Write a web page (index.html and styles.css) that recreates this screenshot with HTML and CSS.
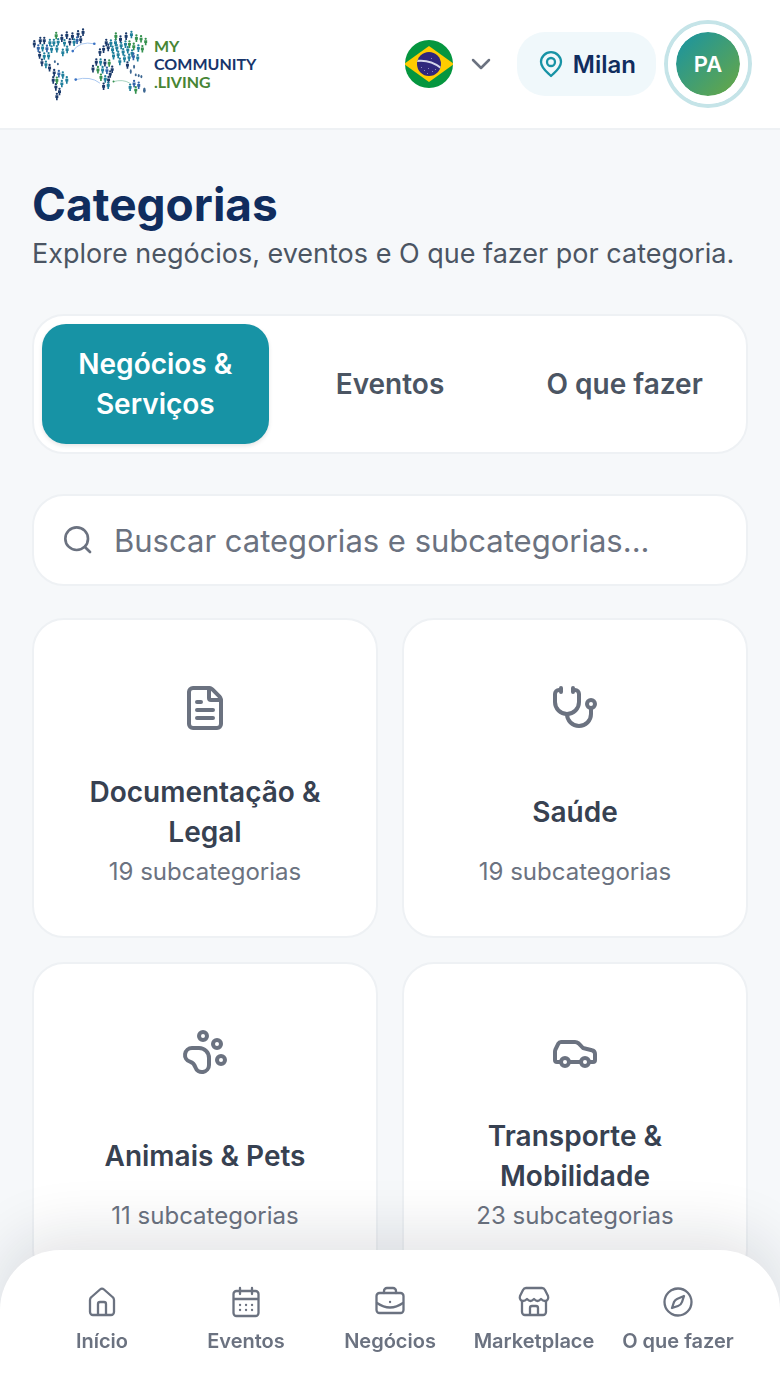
FILE: index.html
```html
<!DOCTYPE html>
<html lang="pt-BR">

<head>
    <meta charset="UTF-8">
    <meta name="viewport" content="width=device-width, initial-scale=1">
    <title>Categorias - My Community Living</title>
    <link rel="stylesheet" href="styles.css">
</head>

<body>
    <header class="header">
        <a class="logo" href="#" aria-label="My Community Living">
            <svg class="logo-map" viewBox="34 36 350 222" aria-hidden="true">
                <defs>
                    <g id="p">
                        <circle cy="-8" r="3.500" />
                        <path d="M-4.500-3.500h9v8h-2v7h-5v-7h-2z" />
                    </g>
                </defs>
                <g fill="#1b3a6b">
                    <use href="#p" x="41" y="86" /><use href="#p" x="59" y="76" /><use href="#p" x="71" y="76" />
                    <use href="#p" x="188" y="51" /><use href="#p" x="173" y="56" /><use href="#p" x="156" y="63" />
                    <use href="#p" x="139" y="60" /><use href="#p" x="124" y="69" /><use href="#p" x="181" y="73" />
                    <use href="#p" x="148" y="80" /><use href="#p" x="57" y="120" /><use href="#p" x="64" y="142" />
                    <use href="#p" x="87" y="158" /><use href="#p" x="101" y="173" /><use href="#p" x="98" y="195" />
                    <use href="#p" x="106" y="216" /><use href="#p" x="117" y="230" /><use href="#p" x="109" y="245" />
                    <use href="#p" x="258" y="82" /><use href="#p" x="250" y="102" /><use href="#p" x="239" y="111" />
                    <use href="#p" x="264" y="97" /><use href="#p" x="318" y="63" /><use href="#p" x="301" y="72" />
                    <use href="#p" x="228" y="141" /><use href="#p" x="218" y="161" /><use href="#p" x="276" y="163" />
                    <use href="#p" x="270" y="177" /><use href="#p" x="250" y="214" /><use href="#p" x="265" y="194" />
                    <use href="#p" x="322" y="150" /><use href="#p" x="254" y="143" />
                </g>
                <g fill="#1f7f9c">
                    <use href="#p" x="88" y="82" /><use href="#p" x="100" y="82" /><use href="#p" x="113" y="80" />
                    <use href="#p" x="132" y="83" /><use href="#p" x="161" y="81" /><use href="#p" x="66" y="98" />
                    <use href="#p" x="93" y="102" /><use href="#p" x="109" y="101" /><use href="#p" x="71" y="123" />
                    <use href="#p" x="84" y="122" /><use href="#p" x="127" y="112" /><use href="#p" x="140" y="103" />
                    <use href="#p" x="76" y="148" /><use href="#p" x="127" y="180" /><use href="#p" x="139" y="195" />
                    <use href="#p" x="124" y="206" /><use href="#p" x="272" y="84" /><use href="#p" x="286" y="82" />
                    <use href="#p" x="334" y="58" /><use href="#p" x="277" y="103" /><use href="#p" x="290" y="98" />
                    <use href="#p" x="303" y="91" /><use href="#p" x="316" y="87" /><use href="#p" x="280" y="122" />
                    <use href="#p" x="294" y="118" /><use href="#p" x="309" y="110" /><use href="#p" x="323" y="104" />
                    <use href="#p" x="336" y="114" /><use href="#p" x="355" y="99" /><use href="#p" x="299" y="139" />
                    <use href="#p" x="313" y="130" /><use href="#p" x="327" y="127" /><use href="#p" x="353" y="128" />
                    <use href="#p" x="241" y="141" /><use href="#p" x="247" y="164" /><use href="#p" x="255" y="192" />
                    <use href="#p" x="264" y="211" /><use href="#p" x="330" y="217" />
                </g>
                <g fill="#2f63a8">
                    <use href="#p" x="53" y="99" /><use href="#p" x="79" y="100" /><use href="#p" x="170" y="75" />
                    <use href="#p" x="115" y="176" /><use href="#p" x="340" y="124" /><use href="#p" x="260" y="166" />
                    <use href="#p" x="342" y="206" /><use href="#p" x="356" y="211" />
                </g>
                <g fill="#35914f">
                    <use href="#p" x="107" y="61" /><use href="#p" x="109" y="196" /><use href="#p" x="287" y="63" />
                    <use href="#p" x="349" y="69" /><use href="#p" x="363" y="71" /><use href="#p" x="377" y="79" />
                    <use href="#p" x="328" y="87" /><use href="#p" x="341" y="94" /><use href="#p" x="367" y="101" />
                    <use href="#p" x="267" y="144" /><use href="#p" x="233" y="164" /><use href="#p" x="242" y="187" />
                    <use href="#p" x="347" y="225" />
                </g>
                <g fill="#3c6691">
                    <ellipse cx="103" cy="140" rx="3" ry="4" /><ellipse cx="112" cy="147" rx="3" ry="4" />
                    <ellipse cx="342" cy="155" rx="3" ry="6" /><ellipse cx="332" cy="170" rx="3" ry="7" />
                    <ellipse cx="347" cy="180" rx="3" ry="4" /><ellipse cx="356" cy="182" rx="3" ry="5" />
                    <ellipse cx="364" cy="185" rx="3" ry="5" /><ellipse cx="373" cy="226" rx="4" ry="8" />
                </g>
                <g fill="none" stroke="#a9c8f0" stroke-width="3">
                    <path d="M157 108Q178 76 222 86M166 194Q210 182 238 204" />
                    <path d="M280 200Q308 192 328 204" stroke="#a7d3bd" />
                </g>
                <g fill="#3b73c4">
                    <circle cx="157" cy="108" r="4" /><circle cx="222" cy="86" r="4" /><circle cx="166" cy="194" r="4" />
                    <circle cx="280" cy="200" r="3" fill="#35914f" />
                </g>
            </svg>
            <span class="logo-text">
                <span>MY</span>
                <span class="logo-navy">COMMUNITY</span>
                <span>.LIVING</span>
            </span>
        </a>

        <div class="header-actions">
            <button class="language" type="button" aria-label="Idioma: Português">
                <svg class="flag" viewBox="0 0 48 48" aria-hidden="true">
                    <defs>
                        <clipPath id="flagClip"><circle cx="24" cy="24" r="24" /></clipPath>
                        <clipPath id="globeClip"><circle cx="24" cy="24" r="12" /></clipPath>
                    </defs>
                    <g clip-path="url(#flagClip)">
                        <path fill="#05963f" d="M0 0h48v48H0z" />
                        <path fill="#fc0" d="M24 6l25 18-25 18L-1 24z" />
                        <circle cx="24" cy="24" r="12" fill="#30277c" />
                        <path clip-path="url(#globeClip)" fill="none" stroke="#d5d5ea" stroke-width="2" d="M11 21q14-2 25 7" />
                        <path fill="#8b86bd" d="M16 27h1v1h-1zM19 30h1v1h-1zM23 28h1v1h-1zM27 31h1v1h-1zM22 33h1v1h-1zM30 29h1v1h-1zM26 18h1v1h-1z" />
                    </g>
                </svg>
                <svg class="chevron" viewBox="0 0 24 24" aria-hidden="true"><path d="M4 8l8 8 8-8" /></svg>
            </button>
            <button class="city" type="button">
                <svg class="pin" viewBox="0 0 28 28" aria-hidden="true">
                    <path d="M14 26C10 22 4 18 4 12a10 9.800 0 0 1 20 0c0 6-6 10-10 14z" />
                    <circle cx="14" cy="12" r="4" />
                </svg>
                Milan
            </button>
            <button class="avatar" type="button">PA</button>
        </div>
    </header>

    <main class="main">
        <h1 class="title">Categorias</h1>
        <p class="subtitle">Explore negócios, eventos e O que fazer por categoria.</p>

        <div class="tabs">
            <button class="tab active" type="button">Negócios &amp; Serviços</button>
            <button class="tab" type="button">Eventos</button>
            <button class="tab" type="button">O que fazer</button>
        </div>

        <label class="search">
            <svg viewBox="0 0 24 24" aria-hidden="true"><circle cx="11" cy="11" r="8.500" /><path d="M17.200 17.200L21 21" /></svg>
            <input type="text" aria-label="Buscar categorias" placeholder="Buscar categorias e subcategorias...">
        </label>

        <div class="cards">
            <a class="card" href="#">
                <span class="card-icon">
                    <svg viewBox="0 0 24 24" aria-hidden="true">
                        <path d="M6 22a2 2 0 0 1-2-2V4a2 2 0 0 1 2-2h8a2.400 2.400 0 0 1 1.700.7l3.600 3.600A2.400 2.400 0 0 1 20 8v12a2 2 0 0 1-2 2z" />
                        <path d="M14 2v5a1 1 0 0 0 1 1h5M10 9H8M16 13H8M16 17H8" />
                    </svg>
                </span>
                <span class="card-title">Documentação &amp; Legal</span>
                <span class="card-count">19 subcategorias</span>
            </a>
            <a class="card" href="#">
                <span class="card-icon">
                    <svg viewBox="0 0 24 24" aria-hidden="true">
                        <path d="M11 2v2M5 2v2M5 3H4a2 2 0 0 0-2 2v4a6 6 0 0 0 12 0V5a2 2 0 0 0-2-2h-1" />
                        <path d="M8 15a6 6 0 0 0 12 0v-3" />
                        <circle cx="20" cy="10" r="2" />
                    </svg>
                </span>
                <span class="card-title">Saúde</span>
                <span class="card-count">19 subcategorias</span>
            </a>
            <a class="card" href="#">
                <span class="card-icon">
                    <svg viewBox="0 0 24 24" aria-hidden="true">
                        <circle cx="11" cy="4" r="2" />
                        <circle cx="18" cy="8" r="2" />
                        <circle cx="20" cy="16" r="2" />
                        <path d="M9 10a5 5 0 0 1 5 5v3.500a3.500 3.500 0 0 1-6.840 1.045Q6.520 17.480 4.460 16.840A3.500 3.500 0 0 1 5.500 10Z" />
                    </svg>
                </span>
                <span class="card-title">Animais &amp; Pets</span>
                <span class="card-count">11 subcategorias</span>
            </a>
            <a class="card" href="#">
                <span class="card-icon">
                    <svg viewBox="0 0 24 24" aria-hidden="true">
                        <path d="M19 17h2c.6 0 1-.4 1-1v-3c0-.9-.7-1.700-1.500-1.900C18.700 10.600 16 10 16 10s-1.300-1.400-2.200-2.300c-.5-.4-1.100-.7-1.800-.7H5c-.6 0-1.100.4-1.400.9l-1.400 2.900A3.700 3.700 0 0 0 2 12v4c0 .6.4 1 1 1h2" />
                        <circle cx="7" cy="17" r="2" />
                        <path d="M9 17h6" />
                        <circle cx="17" cy="17" r="2" />
                    </svg>
                </span>
                <span class="card-title">Transporte &amp; Mobilidade</span>
                <span class="card-count">23 subcategorias</span>
            </a>
        </div>
    </main>

    <nav class="bottom-nav">
        <a href="#">
            <svg viewBox="0 0 32 32" aria-hidden="true">
                <path d="M4 14q0-2 1.500-3L14 3.500q2-1.800 4 0l8.500 7.500q1.500 1 1.500 3v12a3 3 0 0 1-3 3H7a3 3 0 0 1-3-3z" />
                <path d="M12 28V18a2 2 0 0 1 2-2h4a2 2 0 0 1 2 2v10" />
            </svg>
            Início
        </a>
        <a href="#">
            <svg viewBox="0 0 32 32" aria-hidden="true">
                <rect x="3.500" y="5" width="25" height="25" rx="3" />
                <path d="M4 13h24M10 2v6M22 2v6" />
                <path d="M10 19h.1M16 19h.1M22 19h.1M10 24h.1M16 24h.1M22 24h.1" />
            </svg>
            Eventos
        </a>
        <a href="#">
            <svg viewBox="0 0 32 32" aria-hidden="true">
                <rect x="2.500" y="7" width="27" height="20" rx="3" />
                <path d="M10 7V5a3 3 0 0 1 3-3h6a3 3 0 0 1 3 3v2M3 17q13 9 26 0M16 16h.1" />
            </svg>
            Negócios
        </a>
        <a href="#">
            <svg viewBox="0 0 32 32" aria-hidden="true">
                <path d="M8 2h16q2 0 3 2l3 6c1 3-1 5-3 5-2 0-3-1-4-2-1 1-2 2-3.500 2S17 14 16 13c-1 1-2 2-3.500 2S10 14 9 13c-1 1-2 2-4 2s-4-2-3-5l3-6q1-2 3-2z" />
                <path d="M4 15v11a3 3 0 0 0 3 3h18a3 3 0 0 0 3-3V15M12 29v-7a2 2 0 0 1 2-2h4a2 2 0 0 1 2 2v7" />
            </svg>
            Marketplace
        </a>
        <a href="#">
            <svg viewBox="0 0 32 32" aria-hidden="true">
                <circle cx="16" cy="16" r="13.500" />
                <path d="M22 10l-7 3q-2 1-3 3l-2 6 6-2q3-1 4-4z" />
            </svg>
            O que fazer
        </a>
    </nav>
</body>

</html>
```

FILE: styles.css
```css
* {
    box-sizing: border-box;
}

body {
    margin: 0;
    background-color: #f6f8fa;
    color: #4b5563;
    font-family: Inter, sans-serif;
}

button,
input {
    font-family: inherit;
    border: none;
    padding: 0;
    background: none;
}

button {
    cursor: pointer;
}

a {
    color: inherit;
    text-decoration: none;
}

svg {
    display: block;
    flex-shrink: 0;
    fill: none;
    stroke-linecap: round;
    stroke-linejoin: round;
}

/* header */
.header {
    display: flex;
    align-items: center;
    justify-content: space-between;
    height: 130px;
    padding: 0 32px;
    background-color: white;
    border-bottom: 2px solid #eef1f4;
}

.logo {
    display: flex;
    align-items: center;
    gap: 6px;
}

.logo-map {
    width: 116px;
    height: 74px;
}

.logo-text {
    display: flex;
    flex-direction: column;
    color: #478534;
    font-family: Lato, sans-serif;
    font-size: 16px;
    font-weight: 700;
    line-height: 18px;
}

.logo-navy {
    color: #17356b;
}

.header-actions {
    display: flex;
    align-items: center;
    gap: 12px;
}

.language {
    display: flex;
    align-items: center;
    gap: 16px;
    padding-right: 12px;
}

.flag {
    width: 48px;
    height: 48px;
}

.chevron {
    width: 24px;
    height: 24px;
    stroke: #6b7280;
    stroke-width: 2.5;
}

.city {
    display: flex;
    align-items: center;
    gap: 8px;
    height: 64px;
    padding: 0 20px;
    border-radius: 28px;
    background-color: #f0f8fb;
    color: #102d5e;
    font-size: 24px;
    font-weight: 600;
}

.pin {
    width: 28px;
    height: 28px;
    stroke: #1793a5;
    stroke-width: 2.3;
}

.avatar {
    width: 80px;
    height: 80px;
    border: 8px solid white;
    border-radius: 50%;
    background: linear-gradient(135deg, #1793a5, #6aa842) padding-box;
    box-shadow: 0 0 0 4px #c5e4e8;
    color: white;
    font-size: 22px;
    font-weight: 600;
}

/* content */
.main {
    padding: 44px 32px 96px;
}

.title {
    margin: 0;
    color: #102d5e;
    font-size: 46px;
    font-weight: 700;
    line-height: 60px;
}

.subtitle {
    margin: 0 0 40px;
    font-size: 27px;
    line-height: 40px;
}

.tabs {
    display: grid;
    grid-template-columns: repeat(3, 1fr);
    gap: 8px;
    padding: 8px;
    margin-bottom: 40px;
    background-color: white;
    border: 2px solid #eef1f4;
    border-radius: 32px;
}

.tab {
    min-height: 120px;
    padding: 20px 24px;
    border-radius: 24px;
    color: #4b5563;
    font-size: 28px;
    font-weight: 600;
    line-height: 40px;
}

.tab.active {
    background-color: #1793a5;
    box-shadow: 0 2px 4px rgba(0, 0, 0, .1);
    color: white;
}

.search {
    display: flex;
    align-items: center;
    gap: 20px;
    height: 92px;
    padding: 0 28px;
    margin-bottom: 32px;
    background-color: white;
    border: 2px solid #eef1f4;
    border-radius: 32px;
}

.search svg {
    width: 32px;
    height: 32px;
    stroke: #6b7280;
    stroke-width: 2;
}

.search input {
    flex: 1;
    min-width: 0;
    outline: none;
    color: #4b5563;
    font-size: 31px;
}

.search input::placeholder {
    color: #6b7280;
}

.cards {
    display: grid;
    grid-template-columns: 1fr 1fr;
    gap: 24px;
}

.card {
    display: flex;
    flex-direction: column;
    align-items: center;
    padding: 48px;
    background-color: white;
    border: 2px solid #eef1f4;
    border-radius: 32px;
    text-align: center;
}

.card-icon {
    display: flex;
    align-items: center;
    height: 80px;
    margin-bottom: 24px;
}

.card-icon svg {
    width: 48px;
    height: 48px;
    stroke: #6b7280;
    stroke-width: 2;
}

.card-title {
    display: flex;
    align-items: center;
    min-height: 80px;
    margin-bottom: 4px;
    color: #374151;
    font-size: 28px;
    font-weight: 600;
    line-height: 40px;
}

.card-count {
    color: #6b7280;
    font-size: 24px;
    line-height: 32px;
}

/* menu fixed at the bottom of the screen */
.bottom-nav {
    position: fixed;
    left: 0;
    right: 0;
    bottom: 0;
    display: grid;
    grid-template-columns: repeat(5, 1fr);
    padding: 36px 30px 32px;
    background-color: white;
    border-radius: 60px 60px 0 0;
    box-shadow: 0 -16px 60px rgba(15, 23, 42, .12);
}

.bottom-nav a {
    display: flex;
    flex-direction: column;
    align-items: center;
    gap: 8px;
    color: #6b7280;
    font-size: 20px;
    font-weight: 600;
    line-height: 30px;
    white-space: nowrap;
}

.bottom-nav svg {
    width: 32px;
    height: 32px;
    stroke: #6b7280;
    stroke-width: 2.3;
}
```
